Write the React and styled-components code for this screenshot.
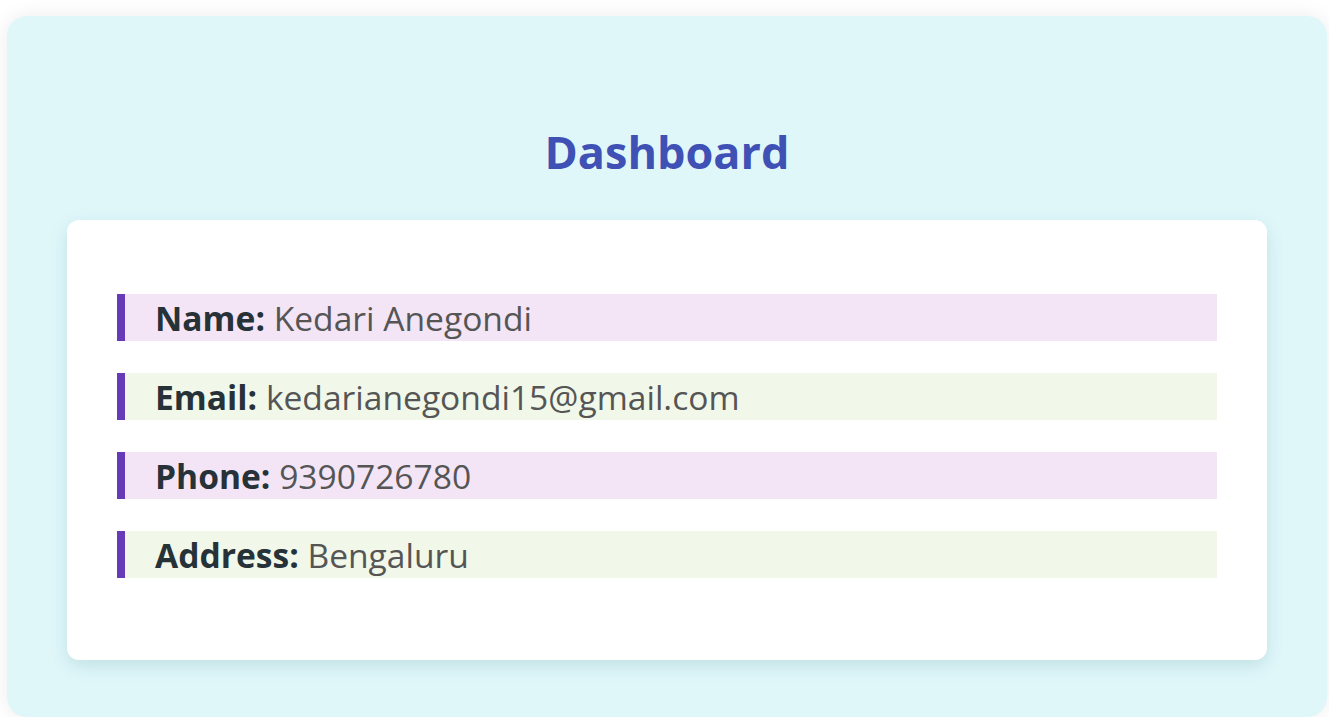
import styled, { createGlobalStyle } from 'styled-components';

const GlobalStyle = createGlobalStyle`
  html, body {
    margin: 0;
    padding: 0;
    background: #ffffff;
    font-family: "Open Sans", "Noto Sans", sans-serif;
  }
`;

const user = {
  name: 'Kedari Anegondi',
  email: 'kedarianegondi15@gmail.com',
  phone: '9390726780',
  address: 'Bengaluru',
};

export default function App() {
  const fields = [
    ['Name', user.name],
    ['Email', user.email],
    ['Phone', user.phone],
    ['Address', user.address],
  ];

  return (
    <>
      <GlobalStyle />
      <Page>
        <Wrapper>
          <Title>Dashboard</Title>
          <Card>
            <InfoList>
              {fields.map(([label, value], i) => (
                <InfoItem key={label} $alt={i % 2 === 1}>
                  <Label>{label}:</Label> <Value>{value}</Value>
                </InfoItem>
              ))}
            </InfoList>
          </Card>
        </Wrapper>
      </Page>
    </>
  );
}

const Page = styled.div`
  padding: 16px 2px 0 7px;
`;

const Wrapper = styled.div`
  background: #e0f7fa;
  border-radius: 20px;
  padding: 104px 60px 57px;
  box-shadow: 0 0 20px rgba(0, 0, 0, 0.08);
`;

const Title = styled.h1`
  margin: 0 0 36px;
  text-align: center;
  color: #3f51b5;
  font-size: 45px;
  line-height: 64px;
  font-weight: 700;
`;

const Card = styled.div`
  background: #ffffff;
  border-radius: 12px;
  padding: 50px;
  box-shadow: 0 6px 18px rgba(0, 96, 100, 0.14);
`;

const InfoList = styled.ul`
  list-style: none;
  margin: 24px 0 0;
  padding: 0;
`;

const InfoItem = styled.li`
  margin-bottom: 32px;
  padding-left: 30px;
  border-left: 8px solid #673ab7;
  background: ${(p) => (p.$alt ? '#f1f8e9' : '#f3e5f5')};
  font-size: 33.6px;
  line-height: 49px;
  height: 47px;
  white-space: nowrap;
`;

const Label = styled.strong`
  color: #263238;
  font-weight: 700;
`;

const Value = styled.span`
  color: #555555;
`;
